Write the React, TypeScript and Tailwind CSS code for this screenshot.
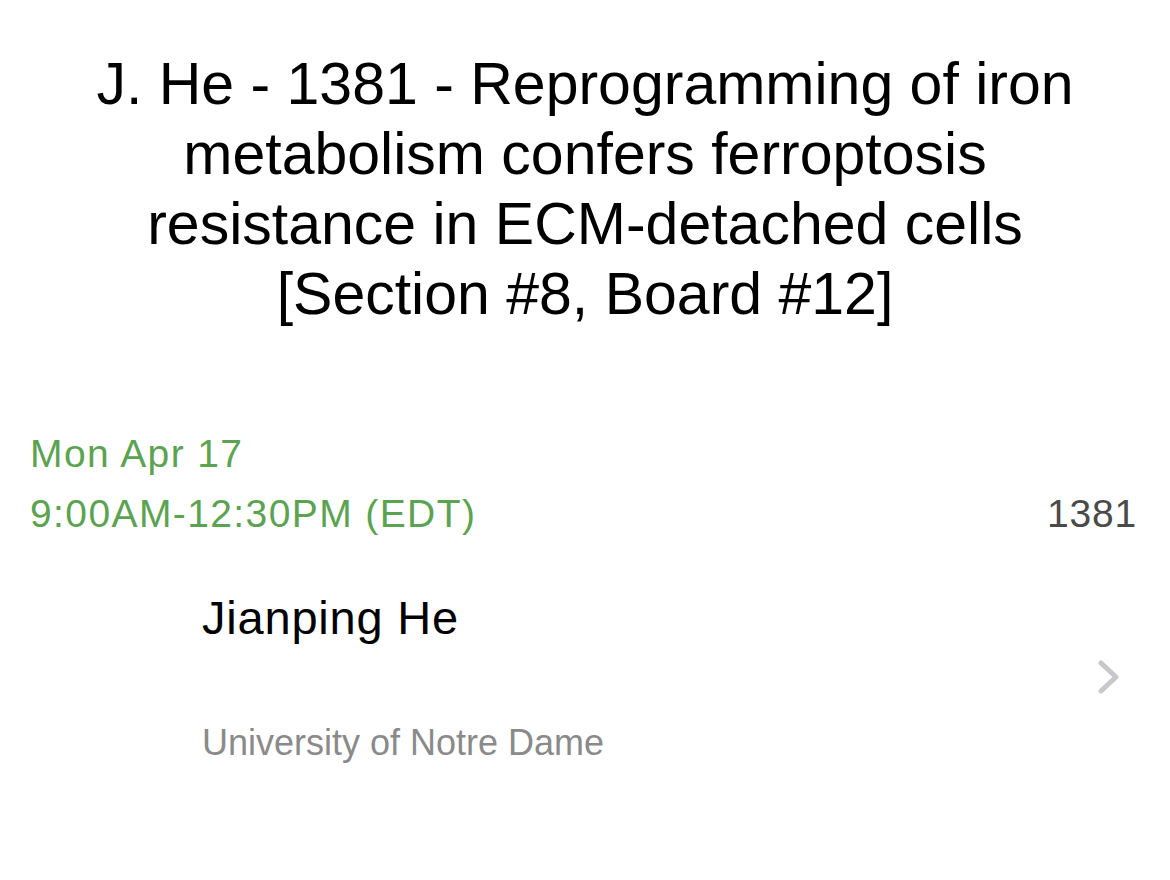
export default function App() {
  return (
    <div className="flex h-[880px] w-[1170px] flex-col bg-white font-['Liberation_Sans',Arial,sans-serif]">
      <h1 className="mt-[49px] text-center text-[59px] font-normal leading-[70px] text-black">
        J. He - 1381 - Reprogramming of iron
        <br />
        metabolism confers ferroptosis
        <br />
        resistance in ECM-detached cells
        <br />
        [Section #8, Board #12]
      </h1>

      <div className="mt-[95px] flex items-end justify-between pl-[30px] pr-[33px]">
        <div className="text-[39px] leading-[60px] tracking-[1.4px] text-[#5ba351]">
          <div>Mon Apr 17</div>
          <div>9:00AM-12:30PM (EDT)</div>
        </div>
        <div className="text-[39px] leading-[60px] tracking-[0.8px] text-[#4a4a4a]">1381</div>
      </div>

      <div className="mt-[46px] flex items-center pl-[202px] pr-[51px]">
        <div className="flex flex-1 flex-col">
          <div className="text-[47px] leading-[56px] tracking-[0.8px] text-black">Jianping He</div>
          <div className="mt-[77px] text-[36px] leading-[40px] text-[#8a8a8a]">University of Notre Dame</div>
        </div>
        <svg width="21" height="34" viewBox="0 0 21 34" fill="none">
          <polyline
            points="3,3 18,17 3,31"
            stroke="#c7c7cc"
            strokeWidth="5"
            strokeLinecap="round"
            strokeLinejoin="round"
          />
        </svg>
      </div>
    </div>
  );
}
